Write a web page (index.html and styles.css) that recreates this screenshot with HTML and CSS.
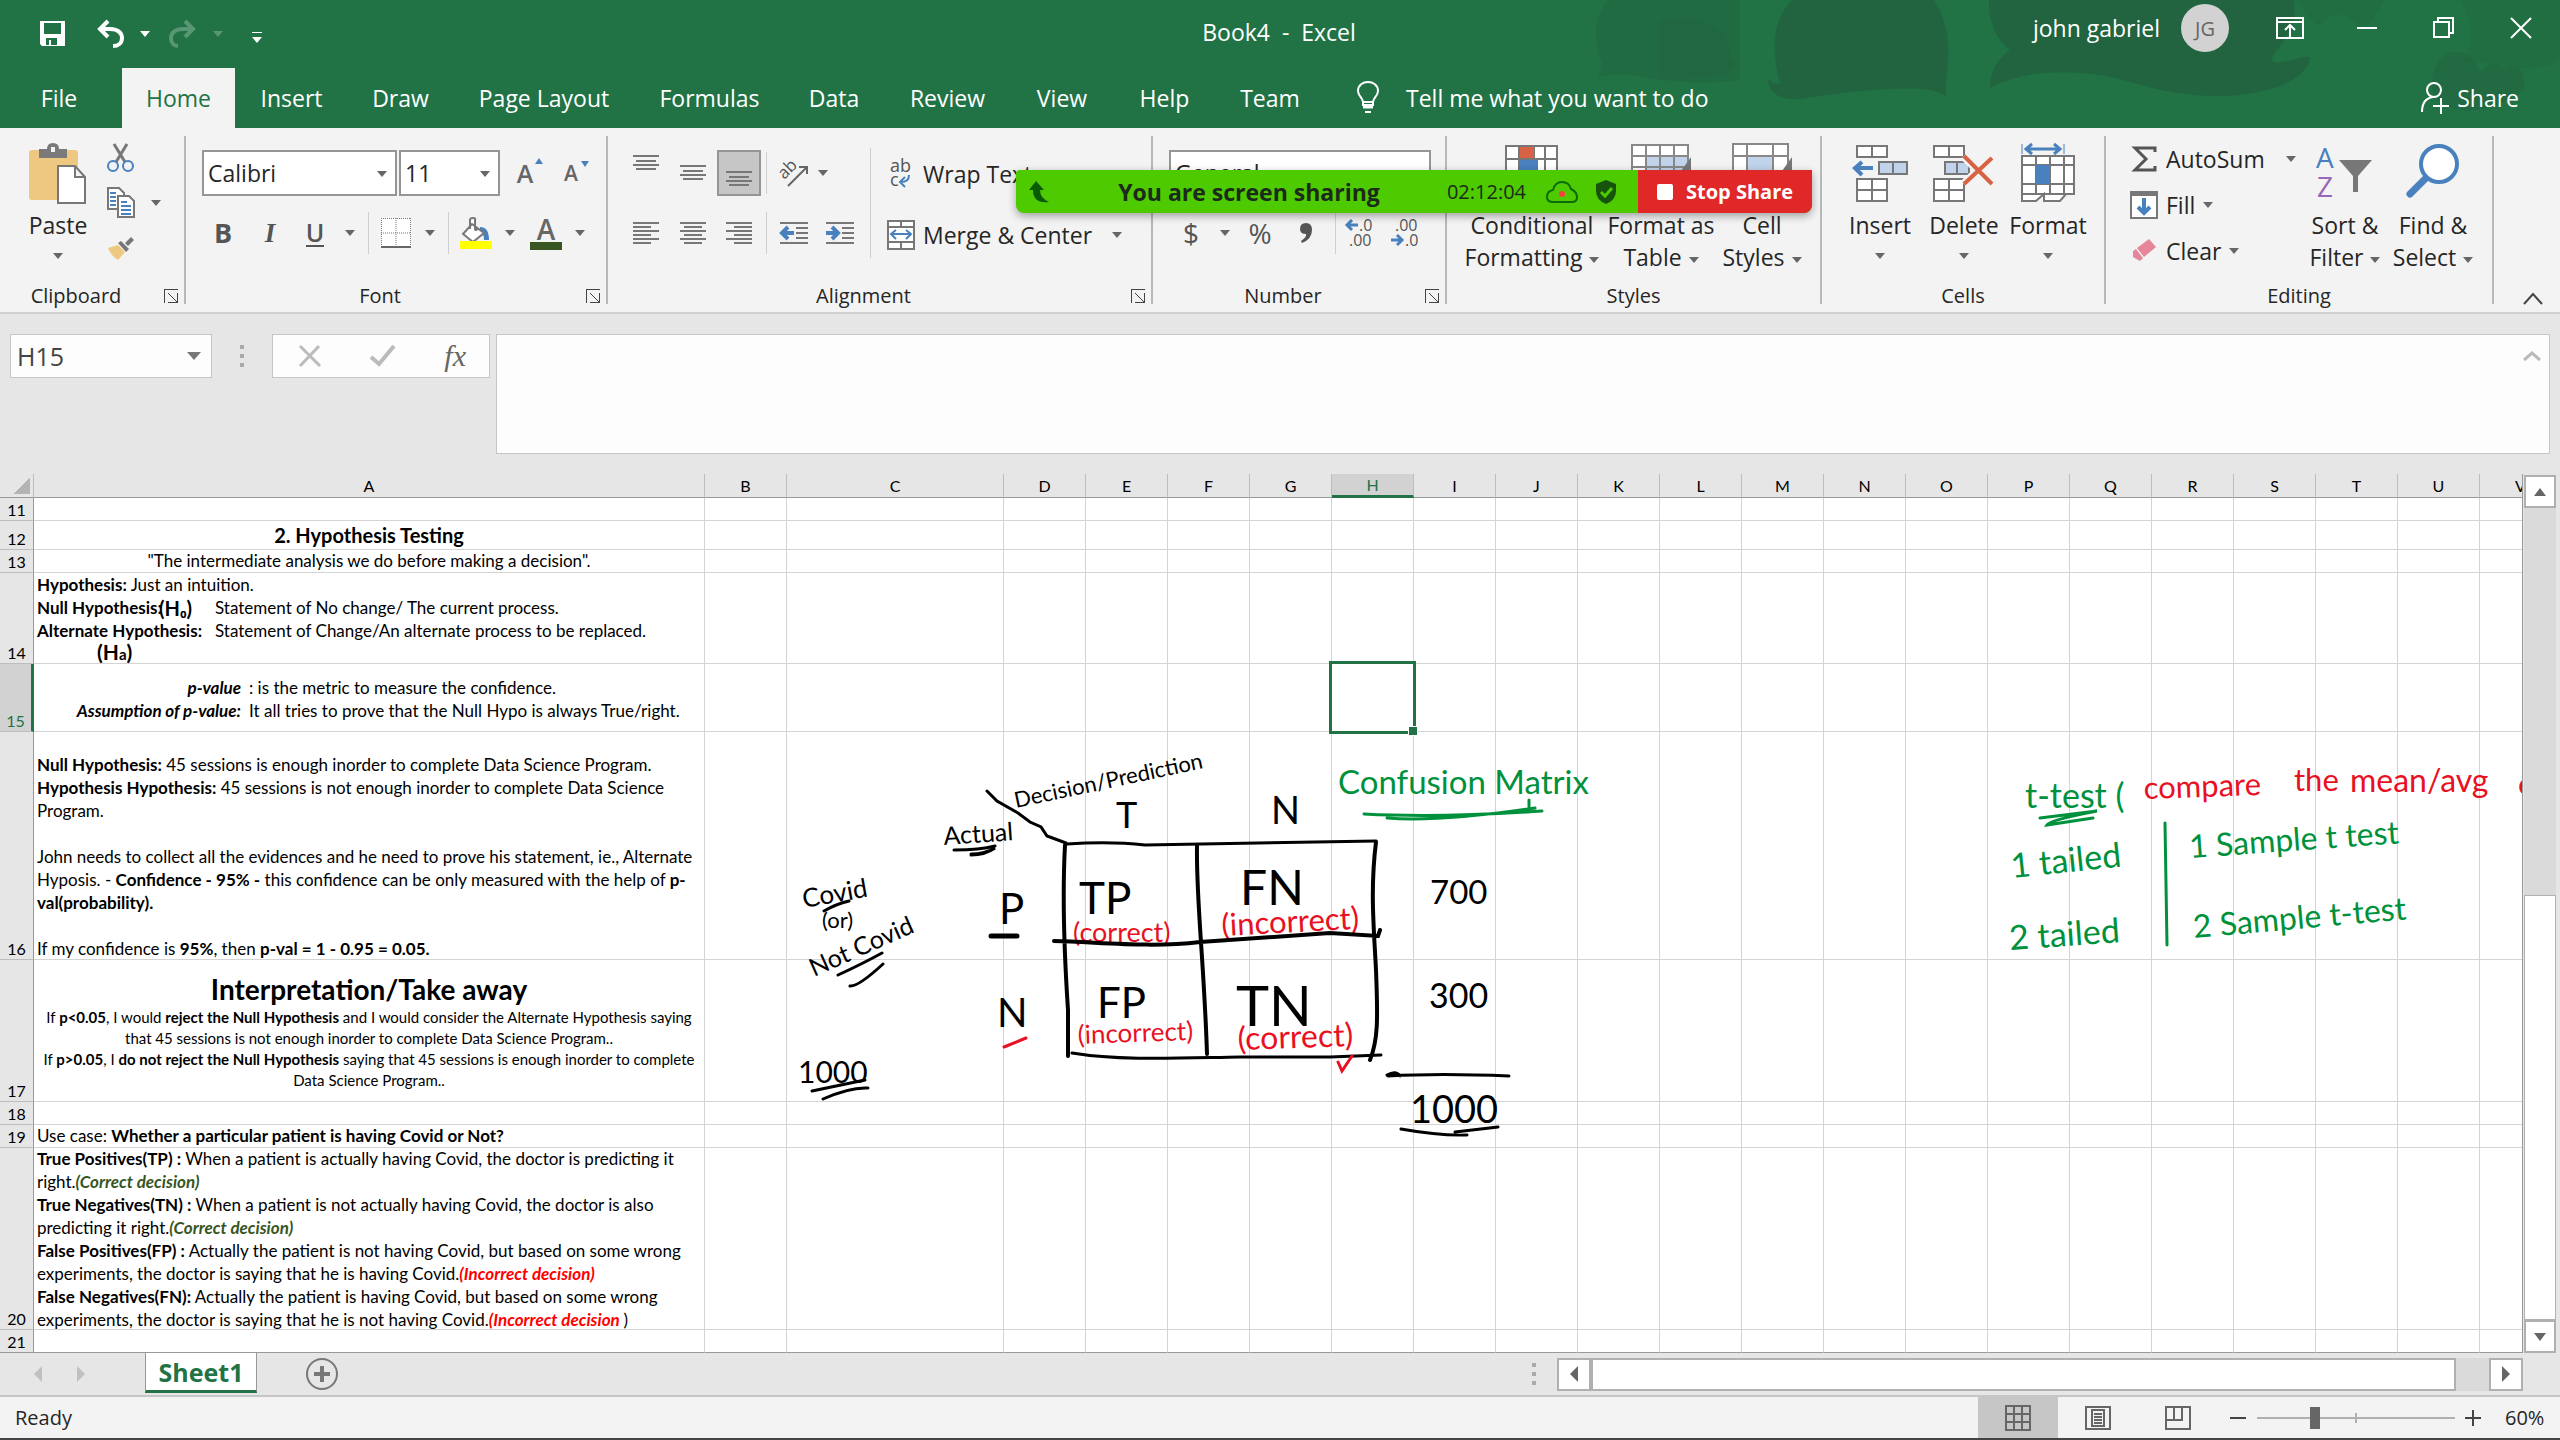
FILE: index.html
```html
<!DOCTYPE html>
<html lang="en">
<head>
<meta charset="utf-8">
<title>Book4 - Excel</title>
<link rel="stylesheet" href="styles.css">
</head>
<body>
<header class="top">
  <svg class="art" width="900" height="128" viewBox="1660 0 900 128" aria-hidden="true">
    <g fill="#21643f">
      <path opacity=".5" d="M1608 0C1590 20 1596 50 1602 62L1598 78C1630 66 1660 90 1740 80V0Z"/>
      <path opacity=".35" d="M1660 20C1700 10 1735 30 1730 60C1745 62 1740 80 1660 80Z"/>
      <path d="M1792 0C1768 24 1774 60 1780 84C1774 84 1768 80 1767 78C1770 96 1784 102 1806 98C1846 92 1868 90 1890 89C1915 88 1932 88 1946 96V80C1952 40 1946 20 1934 0Z"/>
      <path d="M1989 0C1988 20 1996 40 2010 50C1996 60 1990 72 1990 88C2030 66 2090 70 2130 82C2190 100 2240 100 2280 86C2300 78 2310 66 2310 58C2306 54 2298 60 2282 62C2274 64 2266 62 2280 46C2296 24 2296 10 2294 0Z"/>
      <path opacity=".35" d="M2296 0H2384C2376 16 2370 26 2360 30C2350 10 2330 10 2322 26C2312 24 2304 12 2296 0Z"/>
      <path opacity=".35" d="M2460 0C2472 20 2476 44 2462 64C2490 56 2530 80 2560 60V0Z"/>
      <path opacity=".6" d="M2458 52C2432 50 2426 90 2438 100C2460 120 2500 108 2524 90C2526 70 2518 62 2504 68C2498 62 2488 62 2480 72C2476 60 2468 52 2458 52Z"/>
    </g>
  </svg>
  <div class="titlebar">
    <div class="quick">
      <button aria-label="Save"><svg width="26" height="26" viewBox="0 0 26 26"><path fill="#fff" fill-rule="evenodd" d="M0 0H25V25H2L0 23ZM4 2V13H21V2ZM6 17V24H17V17ZM9 19H11V24H9Z"/></svg></button>
      <button aria-label="Undo"><svg width="28" height="28" viewBox="0 0 28 28" fill="none" stroke="#fff" stroke-width="4"><path d="M11 1L3 9L11 17M3 9H13C22 9 25 14 25 18C25 23 21 26 16 26"/></svg></button>
      <span class="caret white"></span>
      <button aria-label="Redo" class="dim"><svg width="28" height="28" viewBox="0 0 28 28" fill="none" stroke="#fff" stroke-width="4"><path d="M17 1L25 9L17 17M25 9H15C6 9 3 14 3 18C3 23 6 26 10 26"/></svg></button>
      <span class="caret white dim"></span>
      <button aria-label="Customize" class="custom"><span class="bar"></span><span class="caret white"></span></button>
    </div>
    <h1>Book4 &nbsp;- &nbsp;Excel</h1>
    <div class="account">
      <span>john gabriel</span><span class="avatar">JG</span>
      <button aria-label="Ribbon display"><svg width="28" height="22" viewBox="0 0 28 22" fill="none" stroke="#fff" stroke-width="2"><path d="M1 1H27V21H1ZM1 5H27M14 20V9M9 13L14 8L19 13"/></svg></button>
      <button aria-label="Minimize"><svg width="20" height="22" viewBox="0 0 20 22"><path stroke="#fff" stroke-width="2" d="M0 11H20"/></svg></button>
      <button aria-label="Restore"><svg width="22" height="22" viewBox="0 0 22 22" fill="none" stroke="#fff" stroke-width="2"><path d="M1 5H16V20H1ZM5 5V1H20V16H16"/></svg></button>
      <button aria-label="Close"><svg width="20" height="20" viewBox="0 0 20 20"><path stroke="#fff" stroke-width="2" d="M0 0L20 20M20 0L0 20"/></svg></button>
    </div>
  </div>
  <nav class="tabs">
    <button>File</button><button class="on">Home</button><button>Insert</button><button>Draw</button><button>Page Layout</button><button>Formulas</button><button>Data</button><button>Review</button><button>View</button><button>Help</button><button>Team</button>
    <button class="tell"><svg width="24" height="34" viewBox="0 0 24 34" fill="none" stroke="#fff" stroke-width="2"><path d="M7 24V21C7 17 2 15 2 10C2 4 7 1 12 1S22 4 22 10C22 15 17 17 17 21V24ZM7 21H17M9 31H15" /><path stroke-width="3" d="M7 26H17"/></svg>Tell me what you want to do</button>
    <button class="share"><svg width="28" height="32" viewBox="0 0 28 32" fill="none" stroke="#fff" stroke-width="2"><circle cx="13" cy="8" r="7"/><path d="M1 30C1 20 5 16 12 15M20 16V32M12 24H28"/></svg>Share</button>
  </nav>
</header>

<section class="ribbon" aria-label="Home ribbon">
  <div class="group clipboard">
    <div class="tools">
      <button class="big paste"><svg width="58" height="62" viewBox="0 0 58 62"><path fill="#eec881" d="M3 7H46Q49 7 49 10V24H28V57H3Q0 57 0 54V10Q0 7 3 7Z"/><path fill="#7a7a7a" d="M10 15V6H18Q18 0 24 0T30 6H38V15Z"/><path fill="#f3f3f3" d="M22 4H26V9H22Z"/><path fill="#fff" stroke="#777" stroke-width="2" d="M29 23H46L56 34V60H29ZM46 23V34H56"/></svg><span>Paste</span><i class="caret"></i></button>
      <div class="mini">
        <button aria-label="Cut"><svg width="28" height="30" viewBox="0 0 28 30" fill="none" stroke-width="2"><path stroke="#777" stroke-width="3" d="M7 1L18 19M20 1L9 19"/><circle cx="6" cy="23" r="5" stroke="#4881bd"/><circle cx="21" cy="23" r="5" stroke="#4881bd"/></svg></button><i></i>
        <button aria-label="Copy"><svg width="28" height="32" viewBox="0 0 28 32"><g fill="#fff" stroke="#777" stroke-width="2"><path d="M1 1H12L17 6V22H1Z"/><path d="M11 9H22L27 14V30H11Z"/></g><path stroke="#4881bd" stroke-width="2" d="M3 6H9M3 10H9M3 14H9M3 18H9M14 15H20M14 19H24M14 23H24M14 27H24"/></svg></button><i class="caret"></i>
        <button aria-label="Format Painter"><svg width="26" height="24" viewBox="0 0 26 24"><path fill="#eec881" d="M0 11L10 8L17 15L10 23Q3 19 0 11Z"/><path fill="#777" d="M10 6L13 4L21 12L18 15ZM17 6L23 0L26 3L20 9Z"/></svg></button><i></i>
      </div>
    </div>
    <div class="label">Clipboard</div><button class="launch" aria-label="Clipboard options"></button>
  </div>

  <div class="group font">
    <div class="row r1">
      <label class="combo"><select aria-label="Font"><option>Calibri</option></select></label>
      <label class="combo"><select aria-label="Font size"><option>11</option></select></label>
      <button class="letter">A<i class="tri up"></i></button>
      <button class="letter small">A<i class="tri"></i></button>
    </div>
    <div class="row r2">
      <button class="fmt b">B</button><button class="fmt i">I</button><button class="fmt u">U</button><i class="caret"></i><i class="sep"></i>
      <button aria-label="Borders"><svg width="30" height="30" viewBox="0 0 30 30"><path fill="#fff" d="M0 0H30V30H0Z"/><path fill="none" stroke="#777" stroke-width="1" stroke-dasharray="1 1" d="M.5 0V30M29.5 0V30M0 .5H30M15 0V30M0 15H30"/><path stroke="#666" stroke-width="2" d="M0 29H30"/></svg></button><i class="caret"></i><i class="sep"></i>
      <button aria-label="Fill Color"><svg width="32" height="32" viewBox="0 0 32 32"><path fill="#4881bd" d="M20 10Q29 10 29 23H24Q24 16 20 14Z"/><path fill="#fff" stroke="#777" stroke-width="2" d="M12 7L24 16L13 25L3 17ZM10 12V3Q10 1 13 1T15 3V12"/><circle cx="16" cy="12" r="2" fill="#777"/><path fill="#ff0" d="M0 24H32V32H0Z"/></svg></button><i class="caret"></i>
      <button aria-label="Font Color" class="color">A</button><i class="caret"></i>
    </div>
    <div class="label">Font</div><button class="launch" aria-label="Font options"></button>
  </div>

  <div class="group align">
    <div class="split">
      <div>
        <div class="row r1">
          <button aria-label="Top Align" class="high"><svg width="26" height="16" viewBox="0 0 26 16" stroke="#777" stroke-width="2"><path d="M0 1H26M3 6H23M0 10H26M3 14H23"/></svg></button>
          <button aria-label="Middle Align"><svg width="26" height="16" viewBox="0 0 26 16" stroke="#777" stroke-width="2"><path d="M0 1H26M3 6H23M0 10H26M3 14H23"/></svg></button>
          <button aria-label="Bottom Align" class="pressed"><svg width="26" height="16" viewBox="0 0 26 16" stroke="#777" stroke-width="2"><path d="M0 1H26M3 6H23M0 10H26M3 14H23"/></svg></button>
          <i class="sep"></i>
          <button aria-label="Orientation"><svg width="30" height="28" viewBox="0 0 30 28"><text x="1" y="17" font-size="17" fill="#555" transform="rotate(-45 8 14)">ab</text><path fill="none" stroke="#666" stroke-width="2" d="M9 27L28 8M20 8H28V15"/></svg></button><i class="caret"></i>
        </div>
        <div class="row r2">
          <button aria-label="Align Left"><svg width="26" height="24" viewBox="0 0 26 24" stroke="#777" stroke-width="2"><path d="M0 2H26M0 6H18M0 10H26M0 14H18M0 18H26M0 22H18"/></svg></button>
          <button aria-label="Center"><svg width="26" height="24" viewBox="0 0 26 24" stroke="#777" stroke-width="2"><path d="M0 2H26M4 6H22M0 10H26M4 14H22M0 18H26M4 22H22"/></svg></button>
          <button aria-label="Align Right"><svg width="26" height="24" viewBox="0 0 26 24" stroke="#777" stroke-width="2"><path d="M0 2H26M8 6H26M0 10H26M8 14H26M0 18H26M8 22H26"/></svg></button>
          <i class="sep"></i>
          <button aria-label="Decrease Indent"><svg width="28" height="24" viewBox="0 0 28 24" fill="none"><path stroke="#777" stroke-width="2" d="M0 2H28M16 7H28M16 12H28M16 17H28M0 22H28"/><path stroke="#4881bd" stroke-width="4" d="M14 12H3M8 6L2 12L8 18"/></svg></button>
          <button aria-label="Increase Indent"><svg width="28" height="24" viewBox="0 0 28 24" fill="none"><path stroke="#777" stroke-width="2" d="M0 2H28M16 7H28M16 12H28M16 17H28M0 22H28"/><path stroke="#4881bd" stroke-width="4" d="M0 12H11M6 6L12 12L6 18"/></svg></button>
        </div>
      </div>
      <div class="wrapmerge">
        <button class="txt"><svg width="28" height="30" viewBox="0 0 28 30"><text x="3" y="13" font-size="18" fill="#555">ab</text><text x="3" y="27" font-size="18" fill="#555">c</text><path fill="none" stroke="#4881bd" stroke-width="2" d="M22 16Q22 23 14 23M18 18L13 23L18 28"/></svg>Wrap Text</button>
        <button class="txt"><svg width="28" height="30" viewBox="0 0 28 30" fill="none"><path fill="#fff" stroke="#777" stroke-width="2" d="M1 1H27V29H1ZM1 7H27M1 22H27M14 1V7M14 22V29"/><path stroke="#4881bd" stroke-width="2" d="M4 14H24M9 10L4 14L9 19M19 10L24 14L19 19"/></svg>Merge &amp; Center<i class="caret"></i></button>
      </div>
    </div>
    <div class="label">Alignment</div><button class="launch" aria-label="Alignment options"></button>
  </div>

  <div class="group number">
    <div class="row r1"><label class="combo"><select aria-label="Number format"><option>General</option></select></label></div>
    <div class="row r2">
      <button class="sym">$</button><i class="caret"></i><button class="sym">%</button><button class="sym comma" aria-label="Comma Style"><svg width="12" height="20" viewBox="0 0 12 20"><path fill="#555" d="M6 0Q12 0 12 7Q12 16 2 20L1 18Q7 14 6 11Q0 11 0 6Q0 0 6 0Z"/></svg></button><i class="sep"></i>
      <button aria-label="Increase Decimal"><svg width="30" height="30" viewBox="0 0 30 30"><g font-size="16" fill="#555"><text x="14" y="13">.0</text><text x="4" y="28">.00</text></g><path fill="none" stroke="#4881bd" stroke-width="3" d="M13 7H2M7 2L2 7L7 12"/></svg></button>
      <button aria-label="Decrease Decimal"><svg width="30" height="30" viewBox="0 0 30 30"><g font-size="16" fill="#555"><text x="4" y="13">.00</text><text x="14" y="28">.0</text></g><path fill="none" stroke="#4881bd" stroke-width="3" d="M0 22H11M6 17L11 22L6 27"/></svg></button>
    </div>
    <div class="label">Number</div><button class="launch" aria-label="Number options"></button>
  </div>

  <div class="group styles">
    <div class="tools">
      <button class="big"><svg width="54" height="62" viewBox="0 0 54 62"><path fill="#fff" stroke="#777" stroke-width="2" d="M1 3H52V60H1ZM14 3V60M29 3V60M40 3V60M1 16H52M1 30H52M1 45H52"/><path fill="#d86344" d="M15 4H29V15H15Z"/><path fill="#4881bd" d="M15 17H33V29H15Z"/></svg><span>Conditional</span><span>Formatting <i class="caret"></i></span></button>
      <button class="big"><svg width="60" height="62" viewBox="0 0 60 62"><path fill="#fff" d="M1 2H57V60H1Z"/><path fill="#c0d3ea" d="M16 13H57V60H16Z"/><path fill="none" stroke="#888" stroke-width="2" d="M1 2H57V60H1ZM15 2V60M29 2V60M43 2V60M1 13H57M1 24H57"/><path fill="#777" d="M50 28L60 14V36Z"/></svg><span>Format as</span><span>Table <i class="caret"></i></span></button>
      <button class="big"><svg width="60" height="62" viewBox="0 0 60 62"><path fill="#fff" d="M1 1H56V60H1Z"/><path fill="#c0d3ea" d="M16 13H41V40H16Z"/><path fill="none" stroke="#888" stroke-width="2" d="M1 1H56V60H1ZM15 1V60M41 1V60M1 13H56"/><path fill="#777" d="M50 28L60 14V36Z"/></svg><span>Cell</span><span>Styles <i class="caret"></i></span></button>
    </div>
    <div class="label">Styles</div>
  </div>

  <div class="group cells">
    <div class="tools">
      <button class="big"><svg width="58" height="62" viewBox="0 0 58 62"><g fill="#fff" stroke="#777" stroke-width="2"><path d="M6 3H36V14H6ZM21 3V14M6 36H36V58H6ZM21 36V58M6 47H36"/><path fill="#c0d3ea" d="M28 19H56V31H28ZM42 19V31"/></g><path fill="none" stroke="#4881bd" stroke-width="4" d="M22 25H4M11 19L4 25L11 32"/></svg><span>Insert</span><i class="caret"></i></button>
      <button class="big"><svg width="62" height="62" viewBox="0 0 62 62"><g fill="#fff" stroke="#777" stroke-width="2"><path d="M1 3H31V14H1ZM16 3V14M1 36H31V58H1ZM16 36V58M1 47H31"/><path fill="#c0d3ea" d="M12 19H36V31H12ZM24 19V31"/></g><path stroke="#f3f3f3" stroke-width="9" d="M31 13L59 41M59 15L31 41"/><path stroke="#d86344" stroke-width="4" d="M31 13L59 41M59 15L31 41"/></svg><span>Delete</span><i class="caret"></i></button>
      <button class="big"><svg width="56" height="62" viewBox="0 0 56 62"><path fill="none" stroke="#4881bd" stroke-width="3" d="M6 6H40M12 1L6 6L12 11M34 1L40 6L34 11"/><path stroke="#4881bd" d="M2 1V11M44 1V11"/><path fill="#fff" stroke="#777" stroke-width="2" d="M2 13H54V51H2ZM16 13V51M30 13V51M44 13V51M2 22H54M2 41H54M2 51V58H16L24 51V58H40L46 51"/><path fill="#4881bd" d="M16 22H30V41H16Z"/></svg><span>Format</span><i class="caret"></i></button>
    </div>
    <div class="label">Cells</div>
  </div>

  <div class="group editing">
    <div class="tools">
      <div class="lines">
        <button class="txt"><svg width="28" height="28" viewBox="0 0 28 28"><path fill="none" stroke="#555" stroke-width="3" d="M25 7V3H5L16 14L5 25H25V21"/></svg>AutoSum<i class="caret"></i></button>
        <button class="txt"><svg width="28" height="28" viewBox="0 0 28 28" fill="none"><path fill="#fff" stroke="#777" stroke-width="2" d="M1 1H27V27H1Z"/><path fill="#777" d="M0 0H28V5H0Z"/><path stroke="#4881bd" stroke-width="4" d="M14 7V22M8 16L14 22L20 16"/></svg>Fill<i class="caret"></i></button>
        <button class="txt"><svg width="28" height="24" viewBox="0 0 28 24"><path fill="#e5869b" d="M7 9L19 0L26 8L14 18ZM3 12L6 10L13 19L10 22L3 18Z"/></svg>Clear<i class="caret"></i></button>
      </div>
      <button class="big"><svg width="60" height="62" viewBox="0 0 60 62"><text x="1" y="25" font-size="28" fill="#4881bd">A</text><text x="2" y="54" font-size="28" fill="#9668b8">Z</text><path fill="#777" d="M24 17H57L43 33V49H38V33Z"/></svg><span>Sort &amp;</span><span>Filter <i class="caret"></i></span></button>
      <button class="big"><svg width="56" height="62" viewBox="0 0 56 62"><path stroke="#4881bd" stroke-width="7" stroke-linecap="round" d="M5 51L20 36"/><circle cx="34" cy="21" r="18" fill="#fff" stroke="#4881bd" stroke-width="4"/></svg><span>Find &amp;</span><span>Select <i class="caret"></i></span></button>
    </div>
    <div class="label">Editing</div>
  </div>
  <button class="collapse" aria-label="Collapse ribbon"><svg width="20" height="12" viewBox="0 0 20 12" fill="none" stroke="#444" stroke-width="2"><path d="M1 11L10 1L19 11"/></svg></button>

  <div class="sharing">
    <svg width="24" height="24" viewBox="0 0 24 24"><path fill="#0a5a06" d="M9 1L17 10H13Q13 18 22 22Q6 24 6 10H2Z"/></svg>
    <strong>You are screen sharing</strong><time>02:12:04</time>
    <svg width="32" height="24" viewBox="0 0 32 24"><path fill="none" stroke="#0d6a0a" stroke-width="2" d="M7 22Q1 22 1 17Q1 11 7 10Q9 2 16 2T25 9Q31 12 31 17Q31 22 26 22Z"/><circle cx="16" cy="14" r="3" fill="#ff3f3f"/></svg>
    <svg class="shield" width="22" height="24" viewBox="0 0 22 24"><path fill="#17530d" d="M11 0L21 4V11Q21 20 11 24Q1 20 1 11V4Z"/><path fill="none" stroke="#4ecb00" stroke-width="3" d="M6 12L10 16L17 8"/></svg>
    <button><i></i>Stop Share</button>
  </div>
</section>

<section class="formula">
  <label class="namebox"><input aria-label="Name Box" value="H15"><i class="caret"></i></label>
  <span class="dots"></span>
  <div class="fx">
    <svg width="24" height="22" viewBox="0 0 24 22"><path stroke="#bbb" stroke-width="3" d="M2 1L22 21M21 1L2 21"/></svg>
    <svg width="26" height="22" viewBox="0 0 26 22"><path fill="none" stroke="#bbb" stroke-width="4" d="M1 12L9 19L24 1"/></svg>
    <button>fx</button>
  </div>
  <div class="entry"><textarea aria-label="Formula Bar"></textarea><svg width="18" height="10" viewBox="0 0 18 10"><path fill="none" stroke="#bbb" stroke-width="3" d="M1 9L9 2L17 9"/></svg></div>
</section>

<main class="sheet">
  <div class="grid">
    <table>
      <colgroup><col class="cn"><col class="ca"><col class="cs"><col class="cc"><col class="cs" span="19"></colgroup>
      <thead><tr><th class="corner"></th><th>A</th><th>B</th><th>C</th><th>D</th><th>E</th><th>F</th><th>G</th><th class="sel">H</th><th>I</th><th>J</th><th>K</th><th>L</th><th>M</th><th>N</th><th>O</th><th>P</th><th>Q</th><th>R</th><th>S</th><th>T</th><th>U</th><th>V</th></tr></thead>
      <tbody id="rows">
        <tr class="h23"><th>11</th><td></td></tr>
        <tr class="h29"><th>12</th><td class="mid"><b class="h2">2. Hypothesis Testing</b></td></tr>
        <tr class="h23"><th>13</th><td class="mid">"The intermediate analysis we do before making a decision".</td></tr>
        <tr class="h91"><th>14</th><td><div class="note defs"><p><b>Hypothesis:</b> Just an intuition.</p><b>Null Hypothesis:</b><span>Statement of No change/ The current process.</span><b>Alternate Hypothesis:</b><span>Statement of Change/An alternate process to be replaced.</span></div></td></tr>
        <tr class="h68 cur"><th>15</th><td><div class="note pval"><b><em>p-value</em></b><span>: is the metric to measure the confidence.</span><b><em>Assumption of p-value:</em></b><span>It all tries to prove that the Null Hypo is always True/right.</span></div></td></tr>
        <tr class="h228"><th>16</th><td><div class="note low"><b>Null Hypothesis:</b> 45 sessions is enough inorder to complete Data Science Program.<br><b>Hypothesis Hypothesis:</b> 45 sessions is not enough inorder to complete Data Science<br>Program.<br><br>John needs to collect all the evidences and he need to prove his statement, ie., Alternate<br>Hyposis. - <b>Confidence - 95% -</b> this confidence can be only measured with the help of <b>p-<br>val(probability).</b><br><br>If my confidence is <b>95%</b>, then <b>p-val = 1 - 0.95 = 0.05.</b></div></td></tr>
        <tr class="h142"><th>17</th><td class="mid"><div class="note take"><h2>Interpretation/Take away</h2>If <b>p&lt;0.05</b>, I would <b>reject the Null Hypothesis</b> and I would consider the Alternate Hypothesis saying<br>that 45 sessions is not enough inorder to complete Data Science Program..<br>If <b>p&gt;0.05</b>, I <b>do not reject the Null Hypothesis</b> saying that 45 sessions is enough inorder to complete<br>Data Science Program..</div></td></tr>
        <tr class="h23"><th>18</th><td></td></tr>
        <tr class="h23"><th>19</th><td>Use case: <b>Whether a particular patient is having Covid or Not?</b></td></tr>
        <tr class="h182"><th>20</th><td><div class="note cases"><b>True Positives(TP) :</b> When a patient is actually having Covid, the doctor is predicting it<br>right.<b class="ok">(Correct decision)</b><br><b>True Negatives(TN) :</b> When a patient is not actually having Covid, the doctor is also<br>predicting it right.<b class="ok">(Correct decision)</b><br><b>False Positives(FP) :</b> Actually the patient is not having Covid, but based on some wrong<br>experiments, the doctor is saying that he is having Covid.<b class="bad">(Incorrect decision)</b><br><b>False Negatives(FN):</b> Actually the patient is having Covid, but based on some wrong<br>experiments, the doctor is saying that he is not having Covid.<b class="bad">(Incorrect decision </b>)</div></td></tr>
        <tr class="h23"><th>21</th><td></td></tr>
      </tbody>
    </table>
    <svg class="ink" width="2560" height="878" viewBox="0 474 2560 878">
      <g fill="#000">
        <text x="159" y="616" font-size="20" font-weight="700">(H₀)</text>
        <text x="97" y="660" font-size="21" font-weight="700">(H<tspan font-size="15">a</tspan>)</text>
        <text x="1016" y="808" font-size="22" transform="rotate(-12 1016 808)">Decision/Prediction</text>
        <text x="1116" y="828" font-size="36">T</text>
        <text x="944" y="845" font-size="25" transform="rotate(-4 944 845)">Actual</text>
        <text x="804" y="908" font-size="26" transform="rotate(-10 804 908)">Covid</text>
        <text x="822" y="928" font-size="22">(or)</text>
        <text x="814" y="977" font-size="25" transform="rotate(-24 814 977)">Not Covid</text>
        <text x="999" y="924" font-size="42">P</text>
        <text x="997" y="1027" font-size="40">N</text>
        <text x="798" y="1083" font-size="30">1000</text>
        <text x="1079" y="914" font-size="44">TP</text>
        <text x="1097" y="1018" font-size="42">FP</text>
        <text x="1240" y="905" font-size="48">FN</text>
        <text x="1236" y="1026" font-size="56">TN</text>
        <text x="1271" y="824" font-size="38">N</text>
        <text x="1430" y="904" font-size="33">700</text>
        <text x="1429" y="1008" font-size="34">300</text>
        <text x="1410" y="1123" font-size="38">1000</text>
      </g>
      <g fill="#e81123">
        <text x="1073" y="942" font-size="27">(correct)</text>
        <text x="1078" y="1044" font-size="26" transform="rotate(-2 1078 1044)">(incorrect)</text>
        <text x="1222" y="936" font-size="31" transform="rotate(-3 1222 936)">(incorrect)</text>
        <text x="1238" y="1050" font-size="32" transform="rotate(-2 1238 1050)">(correct)</text>
        <text x="2144" y="799" font-size="31" transform="rotate(-2 2144 799)">compare</text>
        <text x="2294" y="791" font-size="31">the</text>
        <text x="2350" y="792" font-size="32">mean/avg</text>
        <text x="2518" y="795" font-size="31">of</text>
      </g>
      <g fill="#00913c">
        <text x="1338" y="794" font-size="33">Confusion Matrix</text>
        <text x="2025" y="808" font-size="34">t-test (</text>
        <text x="2012" y="878" font-size="34" transform="rotate(-6 2012 878)">1 tailed</text>
        <text x="2010" y="950" font-size="34" transform="rotate(-4 2010 950)">2 tailed</text>
        <text x="2190" y="858" font-size="32" transform="rotate(-4 2190 858)">1 Sample t test</text>
        <text x="2194" y="938" font-size="32" transform="rotate(-5 2194 938)">2 Sample t-test</text>
      </g>
      <g fill="none" stroke="#000" stroke-width="3" stroke-linecap="round">
        <path d="M987 791L997 801L1018 813L1030 822L1041 827L1047 836L1066 843M1067 844Q1110 841 1145 845L1376 841"/>
        <path d="M1072 1053C1120 1061 1180 1058 1240 1057H1330L1381 1055"/>
        <path stroke-width="4" d="M1065 845C1062 900 1064 950 1068 1010V1056M1054 941C1100 942 1150 948 1200 942L1330 933L1378 936L1380 930M1197 846C1196 900 1204 960 1207 1054M1376 842C1370 890 1374 930 1376 970C1378 1020 1378 1040 1370 1060"/>
        <path d="M954 850Q980 850 995 846M971 854Q985 854 995 848Q985 855 971 855M824 911Q836 904 849 901M838 975Q862 964 882 953M850 986Q858 987 883 964M812 1091L865 1080M823 1099Q850 1087 868 1088M1387 1075Q1396 1070 1400 1076M1388 1076Q1440 1073 1509 1076M1401 1129Q1440 1136 1467 1135M1455 1132L1498 1127"/>
        <path stroke-width="5" d="M991 936H1017"/>
      </g>
      <g fill="none" stroke="#e81123" stroke-width="3" stroke-linecap="round">
        <path d="M1004 1047L1026 1038M1352 1056L1342 1071L1338 1062"/>
      </g>
      <g fill="none" stroke="#00913c" stroke-width="3" stroke-linecap="round">
        <path d="M1364 814Q1440 818 1542 811M1387 818Q1440 822 1535 808M1529 800V810M2040 818L2097 811Q2050 820 2047 825L2093 818M2165 823L2167 945"/>
      </g>
    </svg>
  </div>
  <div class="vbar"><button aria-label="Scroll up"><i class="tri up"></i></button><span></span><i class="thumb"></i><button aria-label="Scroll down"><i class="tri"></i></button></div>
</main>

<section class="sheetbar">
  <span class="nav"><i></i><i></i></span>
  <button class="tab">Sheet1</button>
  <button class="add" aria-label="New sheet"><svg width="34" height="34" viewBox="0 0 34 34" fill="none" stroke="#777"><circle cx="17" cy="17" r="15" stroke-width="2"/><path stroke-width="4" d="M17 9V25M9 17H25"/></svg></button>
  <span class="dots"></span>
  <div class="hbar"><button aria-label="Scroll left"><i class="l"></i></button><i class="thumb"></i><span></span><button aria-label="Scroll right"><i class="r"></i></button></div>
</section>

<footer class="status">
  <span class="ready">Ready</span>
  <button class="on" aria-label="Normal"><svg width="26" height="26" viewBox="0 0 26 26"><path fill="none" stroke="#666" stroke-width="2" d="M1 1H25V25H1ZM9 1V25M17 1V25M1 9H25M1 17H25"/></svg></button>
  <button aria-label="Page Layout"><svg width="26" height="26" viewBox="0 0 26 26"><path fill="none" stroke="#666" stroke-width="2" d="M1 2H25V24H1ZM7 5H19V21H7ZM9 9H17M9 12H17M9 15H17M9 18H17"/></svg></button>
  <button aria-label="Page Break Preview"><svg width="26" height="26" viewBox="0 0 26 26"><path fill="none" stroke="#666" stroke-width="2" d="M1 2H25V24H1ZM1 15H17V2M9 2V15"/></svg></button>
  <svg width="16" height="16" viewBox="0 0 16 16"><path stroke="#444" stroke-width="2" d="M0 8H16"/></svg>
  <input type="range" min="0" max="100" value="28" aria-label="Zoom">
  <svg width="16" height="16" viewBox="0 0 16 16"><path stroke="#444" stroke-width="2" d="M0 8H16M8 0V16"/></svg>
  <span class="pct">60%</span>
</footer>
<script src="grid.js"></script>
</body>
</html>
```
FILE: grid.js
```js
// Fill every row with its empty cells, columns B to V.
document.querySelectorAll('#rows tr').forEach(function (row) {
  for (var c = 0; c < 21; c++) {
    var cell = document.createElement('td');
    if (row.classList.contains('cur') && c === 6) cell.className = 'active';
    row.appendChild(cell);
  }
});
```
FILE: styles.css
```css
*{box-sizing:border-box}
body{margin:0;min-height:100vh;display:flex;flex-direction:column;background:#e6e6e6;font-family:"Open Sans",sans-serif;font-size:23px;color:#262626;overflow-x:hidden;border-bottom:2px solid #444}
button{font:inherit;color:inherit;background:none;border:0;padding:0;margin:0;display:flex;align-items:center;justify-content:center;white-space:nowrap}
svg{display:block;flex:none;overflow:visible}
i{font-style:normal}
.caret{display:inline-block;flex:none;border:5px solid transparent;border-top:6px solid #666;border-bottom:0;vertical-align:middle}
.caret.white{border-top-color:#fff}
.dim{opacity:.25}
.tri{border:6px solid transparent;border-top:8px solid #666;border-bottom:0}
.tri.up{border-top:0;border-bottom:8px solid #666}

.top{background:#217346;color:#fff;position:relative;overflow:hidden}
.art{position:absolute;right:0;top:0;overflow:visible}
.titlebar{position:relative;height:68px;display:grid;grid-template-columns:1fr auto 1fr;align-items:center}
.quick{display:grid;grid-template-columns:62px 54px 14px 60px 12px 66px;justify-items:center;align-items:center;padding-left:22px}
.custom{flex-direction:column;gap:4px;padding-top:6px}
.custom .bar{width:10px;height:1px;background:#fff}
h1{font-size:23px;font-weight:400;line-height:32px;margin:0 2px 4px 0}
.account{display:flex;align-items:center;justify-content:flex-end;height:56px;align-self:start;padding-right:29px}
.avatar{width:48px;height:48px;border-radius:50%;background:#d2d2d2;color:#666;font-size:20px;display:flex;align-items:center;justify-content:center;margin:0 22px 0 21px}
.account button{width:50px;margin-left:27px}
.account button:first-of-type{margin-left:14px}
.account button:last-of-type{width:20px;margin-left:42px}
.tabs{position:relative;height:60px;display:grid;grid-template-columns:122px 113px 113px 105px 182px 149px 100px 127px 102px 103px 108px auto 1fr}
.tabs button:first-child{padding-right:4px}
.tabs .on{background:#f3f3f3;color:#217346}
.tabs .tell{gap:26px;margin-left:32px}
.tabs .share{justify-self:end;gap:8px;padding-right:41px}

.ribbon{position:relative;display:grid;grid-template-columns:186px 422px 545px 294px 375px 284px 388px 1fr;height:186px;background:#f3f3f3;border-bottom:2px solid #d0d0d0}
.group{position:relative;margin:8px 0;border-right:2px solid #b8b8b8;display:grid;grid-template-columns:minmax(0,1fr);grid-template-rows:60px 60px 48px;min-width:0}
.group>.tools,.group>.split{grid-row:1/3}
.label{grid-row:3;align-self:end;height:30px;line-height:30px;font-size:20px;text-align:center;margin-bottom:-7px}
.label:not(:last-child){padding-right:32px}
.launch{position:absolute;right:6px;bottom:1px;width:14px;height:14px;border:1px solid #444;border-right:0;border-bottom:0}
.launch::after{content:"";position:absolute;right:0;bottom:0;width:9px;height:9px;border:1px solid #444;border-top:0;border-left:0;background:linear-gradient(to top right,transparent 45%,#444 45% 55%,transparent 55%)}
.tools{display:flex}
.big{flex-direction:column;justify-content:flex-start;line-height:32px;height:160px}
.big svg{margin:7px 0 4px}
.big>.caret{margin-top:12px}
.big span .caret{margin-left:1px}
.clipboard .tools{padding-left:24px}
.paste{width:68px}
.mini{display:grid;grid-template-columns:36px 34px;grid-template-rows:44px 46px 46px;align-items:center;justify-items:center;margin-left:11px;height:136px}
.row{display:grid;align-items:center;justify-items:center;justify-content:start}
.r1{padding-top:13px;height:60px}
.r2{grid-auto-rows:44px;padding-top:15px}
.sep{width:1px;height:42px;background:#cfcfcf}
.combo{position:relative;width:100%;height:46px}
.combo select{appearance:none;width:100%;height:46px;border:2px solid #959595;border-radius:0;background:#fff;font:inherit;color:#262626;padding:0 4px}
.combo::after{content:"";position:absolute;right:10px;top:21px;border:5px solid transparent;border-top:6px solid #666;border-bottom:0}
.font .row{margin-left:16px}
.font .r1{grid-template-columns:195px 101px 46px 42px;gap:2px}
.font .r2{grid-template-columns:42px 52px 38px 32px 4px 52px 16px 20px 36px 32px 40px 28px}
.letter{position:relative;font-size:25px;font-weight:600;color:#666;width:40px}
.letter.small{font-size:21px}
.letter .tri{position:absolute;right:2px;top:2px;border-width:0 4px 6px;border-bottom-color:#4881bd}
.letter .tri:not(.up){border-width:6px 4px 0;border-top-color:#4881bd}
.fmt{font-size:27px;color:#555;line-height:30px}
.fmt.b{font-weight:700}
.fmt.i{font-family:"Liberation Serif",serif;font-style:italic;font-weight:700}
.fmt.u{border-bottom:2px solid #555;line-height:26px;height:28px;font-weight:600;font-size:25px}
.color{font-size:28px;font-weight:600;color:#666;width:32px;height:34px;line-height:24px;border-bottom:8px solid #375623}
.split{display:flex}
.align .row{margin-left:14px;grid-template-columns:47px 47px 46px 8px 48px 44px}
.align .r1 .caret{justify-self:start}
.high{align-self:start;margin-top:6px}
.pressed{width:44px;height:46px;background:#c6c6c6;border:2px solid #959595;padding-top:12px}
.wrapmerge{border-left:1px solid #cfcfcf;margin:12px 0 -2px 8px;padding-left:16px;display:grid;grid-template-rows:52px 70px}
.txt{justify-content:flex-start;gap:8px}
.wrapmerge .caret{margin-left:12px}
.number .row{margin-left:16px}
.number .r1{grid-template-columns:262px}
.number .r2{grid-template-columns:44px 24px 46px 46px 12px 38px 54px}
.number .sep{justify-self:center}
.sym{font-size:28px;color:#555}
.styles .tools{padding-left:16px}
.styles .big:nth-child(1){width:138px}
.styles .big:nth-child(2){width:120px}
.styles .big:nth-child(3){width:82px}
.cells .tools{padding-left:16px}
.cells .big{width:84px}
.lines{width:198px;padding-left:24px;display:grid;grid-template-rows:46px 46px 46px;height:138px}
.lines .txt:first-child .caret{margin-left:13px}
.editing .big{width:82px}
.editing .big:last-child{width:94px}
.collapse{align-self:end;justify-self:end;margin:0 17px 7px 0}
.sharing{position:absolute;left:1016px;top:42px;width:796px;height:43px;display:grid;grid-template-columns:46px 374px 101px 50px 51px 174px;justify-items:center;align-items:center;background:#4ecb00;border-radius:4px 0 8px 8px;box-shadow:0 3px 8px rgba(0,0,0,.35);color:#1c2a1c;font-size:20px}
.sharing strong{font-size:23px}
.shield{justify-self:start;margin-left:8px}
.sharing button{width:100%;height:43px;background:#e02828;color:#fff;font-weight:700;gap:13px;border-radius:0 0 8px 0}
.sharing button i{width:16px;height:16px;background:#fff;border-radius:2px}

.formula{display:flex;align-items:flex-start;padding:20px 10px 20px;height:160px}
.namebox,.fx,.entry{background:#fdfdfd;border:1px solid #c6c6c6;display:flex;align-items:center}
.namebox{width:202px;height:44px;padding-right:10px}
.namebox input{flex:1;min-width:0;border:0;background:none;font:inherit;font-size:25px;color:#444;padding:0 0 0 6px}
.namebox .caret{border-width:8px 7px 0;border-top-color:#777}
.dots{width:4px;height:22px;background:linear-gradient(#aaa 4px,transparent 4px 9px,#aaa 9px 13px,transparent 13px 18px,#aaa 18px)}
.formula .dots{margin:11px 28px}
.fx{width:218px;height:44px;justify-content:space-between;padding:0 23px 0 25px}
.fx button{font:italic 30px "Liberation Serif",serif;color:#666}
.entry{flex:1;margin-left:6px;height:120px;align-items:flex-start}
.entry textarea{flex:1;height:118px;border:0;background:none;resize:none;font:inherit;padding:8px}
.entry svg{margin:16px 8px}

.sheet{display:flex}
.grid{position:relative;flex:1;min-width:0;overflow:hidden;border-right:1px solid #999;font-family:Lato,sans-serif;font-size:17px;color:#000}
.ink{position:absolute;left:0;top:0}
table{border-collapse:separate;border-spacing:0;table-layout:fixed;width:2562px;background:#fff}
.cn{width:34px}.ca{width:671px}.cs{width:82px}.cc{width:217px}
thead th{height:24px;padding:0;background:#e6e6e6;font-size:16px;font-weight:400;line-height:20px;border-right:1px solid #bdbdbd;border-bottom:1px solid #999}
thead .sel{background:#d2d2d2;color:#217346;border-bottom:3px solid #217346}
.corner{background:linear-gradient(135deg,transparent 50%,#b4b4b4 50%) no-repeat 14px 4px/16px 16px #e6e6e6}
tbody th{padding:0;background:#e6e6e6;font-size:16px;font-weight:400;vertical-align:bottom;line-height:20px;border-right:1px solid #999;border-bottom:1px solid #bdbdbd}
tbody td{padding:0 0 0 3px;border-right:1px solid #d4d4d4;border-bottom:1px solid #d4d4d4;vertical-align:top;line-height:22px;white-space:nowrap}
.cur th{background:#d2d2d2;color:#217346;border-right:3px solid #217346}
tbody tr:last-child>*{border-bottom-color:#999}
.h23{height:23px}.h29{height:29px}.h91{height:91px}.h68{height:68px}.h228{height:228px}.h142{height:142px}.h182{height:182px}
.mid{text-align:center;padding-right:3px}
.h2{font-size:20px;line-height:28px}
.note{line-height:23px;margin-bottom:-10px}
.note p{grid-column:1/3;margin:0}
.defs{display:grid;grid-template-columns:178px 1fr}
.pval{display:grid;grid-template-columns:204px 1fr;column-gap:8px;padding-top:12px}
.pval b{text-align:right}
.low{padding-top:21px}
.take{line-height:21px;font-size:15px;padding-top:11px}
.take h2{font-size:28px;line-height:36px;margin:0}
.cases{margin-top:-1px}
.ok,.bad{font-style:italic;color:#375623}
.bad{color:#f00}
.active{position:relative}
.active::before{content:"";position:absolute;inset:-3px;border:3px solid #217346}
.active::after{content:"";position:absolute;right:-4px;bottom:-4px;width:8px;height:8px;background:#217346;outline:1px solid #fff}
.vbar{width:37px;padding:1px 4px 0 1px;display:flex;flex-direction:column}
.vbar button,.vbar .thumb,.hbar button,.hbar .thumb{background:#fff;border:2px solid #b0b0b0}
.vbar button{height:33px;flex:none}
.vbar span{flex:none;height:387px;background:#dadada}
.vbar .thumb{flex:1;border-width:1px}

.sheetbar{display:flex;align-items:center;height:44px;border-bottom:2px solid #c6c6c6;padding-right:37px}
.nav{width:145px;display:flex;gap:35px;padding-left:34px}
.nav i{border:8px solid transparent;border-right-color:#c0c0c0;border-left:0}
.nav i+i{border-right:0;border-left:8px solid #c0c0c0}
.tab{width:112px;height:40px;align-self:flex-start;background:#fff;border:1px solid #999;border-top:0;border-bottom:3px solid #217346;color:#217346;font-weight:700;font-size:25px}
.add{margin:0 auto 0 48px}
.hbar{display:flex;width:966px;height:33px;margin-left:21px}
.hbar button{width:34px;flex:none}
.hbar .thumb{flex:1}
.hbar span{width:33px;background:#dadada}
.hbar .l,.hbar .r{border:8px solid transparent;border-right-color:#666;border-left:0}
.hbar .r{border-right:0;border-left:8px solid #666}
.status{display:flex;align-items:center;flex:1;min-height:41px;background:#f3f3f3;font-size:20px;padding-right:15px}
.ready{margin-right:auto;padding-left:15px}
.status button{width:80px;align-self:stretch}
.status .on{background:#c6c6c6}
.status button+svg{margin-left:12px}
.status input{appearance:none;width:198px;height:22px;margin:0 10px 0 11px;background:linear-gradient(#b0b0b0,#b0b0b0) 98px 6px/2px 10px no-repeat,linear-gradient(#b0b0b0,#b0b0b0) 0 10px/100% 2px no-repeat}
.status input::-webkit-slider-thumb{appearance:none;width:10px;height:22px;background:#666;border:0}
.pct{width:40px;margin-left:24px}
```
